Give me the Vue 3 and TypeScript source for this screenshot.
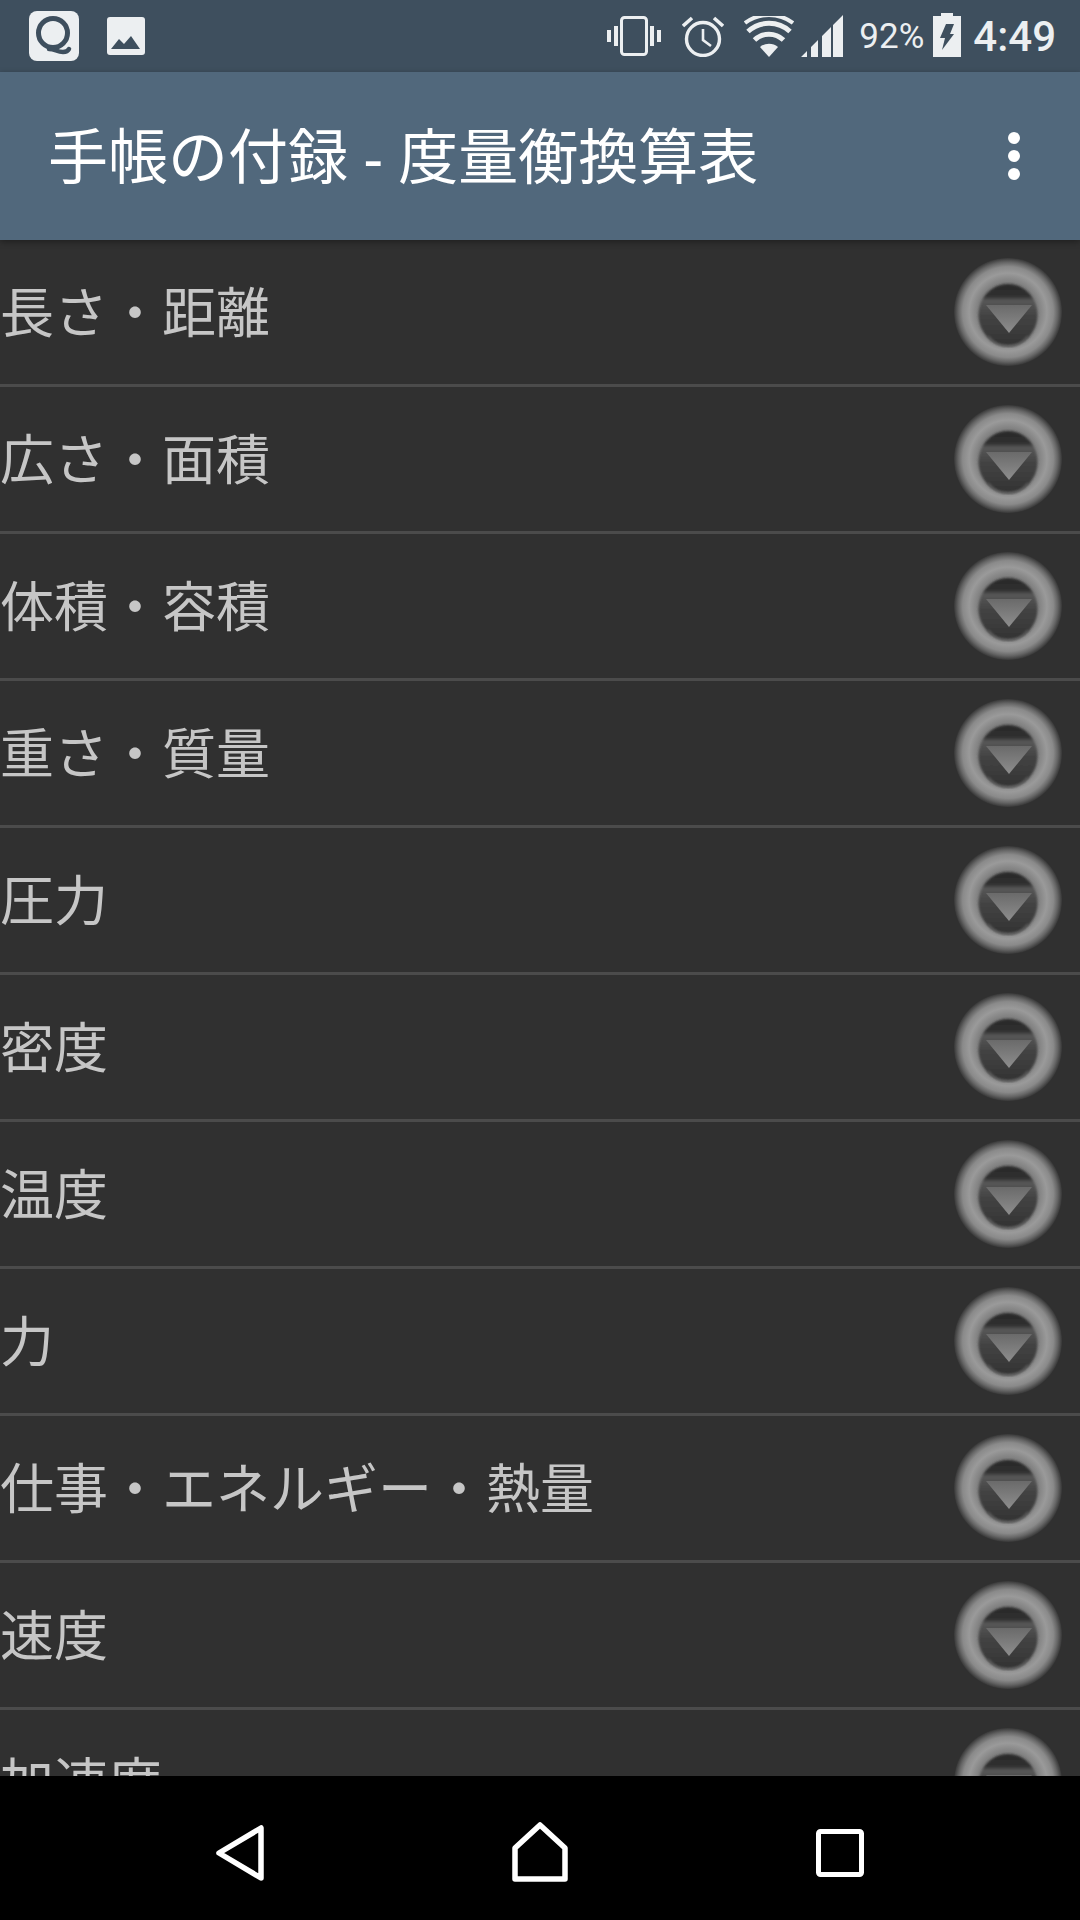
<script setup lang="ts">
const items: string[] = [
  '長さ・距離',
  '広さ・面積',
  '体積・容積',
  '重さ・質量',
  '圧力',
  '密度',
  '温度',
  '力',
  '仕事・エネルギー・熱量',
  '速度',
  '加速度',
]
</script>

<template>
  <div class="screen">
    <div class="status-bar">
      <div class="q-icon">
        <svg width="50" height="50" viewBox="0 0 50 50">
          <circle cx="24" cy="22" r="14.5" fill="none" stroke="#3e4f5e" stroke-width="5" />
          <path d="M20 38 C26 38 28 41 34 41 C37 41 39 40 40 38" fill="none" stroke="#3e4f5e" stroke-width="4.5" stroke-linecap="round" />
        </svg>
      </div>
      <svg class="pic-icon" width="38" height="38" viewBox="0 0 38 38">
        <rect width="38" height="38" rx="3" fill="#eceff1" />
        <path d="M4 32 L12 22 L17 27 L24 19 L33 32 Z" fill="#3e4f5e" />
      </svg>
      <div class="spacer"></div>
      <svg class="vibrate" width="54" height="40" viewBox="0 0 54 40">
        <rect x="14.5" y="1.5" width="25" height="37" rx="3" fill="none" stroke="#eceff1" stroke-width="3" />
        <rect x="7" y="10" width="4" height="20" fill="#eceff1" />
        <rect x="0" y="14" width="4" height="12" fill="#eceff1" />
        <rect x="43" y="10" width="4" height="20" fill="#eceff1" />
        <rect x="50" y="14" width="4" height="12" fill="#eceff1" />
      </svg>
      <svg class="alarm" width="42" height="42" viewBox="0 0 42 42">
        <circle cx="21" cy="24" r="16.5" fill="none" stroke="#eceff1" stroke-width="3.4" />
        <path d="M21 14 V25 L29 31" fill="none" stroke="#eceff1" stroke-width="2.6" />
        <path d="M1 11 L10 3 M41 11 L32 3" fill="none" stroke="#eceff1" stroke-width="3.6" />
      </svg>
      <svg class="wifi" width="50" height="41" viewBox="0 0 50 41">
        <path d="M25 41 L16 31 A14 14 0 0 1 34 31 Z" fill="#eceff1" />
        <path d="M10.5 24 A21 21 0 0 1 39.5 24 M4 15.5 A31 31 0 0 1 46 15.5" fill="none" stroke="#eceff1" stroke-width="5" />
        <path d="M1 7 A40 40 0 0 1 49 7" fill="none" stroke="#eceff1" stroke-width="4" />
      </svg>
      <svg class="signal" width="42" height="42" viewBox="0 0 42 42">
        <path d="M0 42 L6 36 V42 Z M10 42 V32 L17 25 V42 Z M21 42 V21 L30 12 V42 Z M32 42 V10 L42 0 V42 Z" fill="#eceff1" />
      </svg>
      <span class="battery-text">92%</span>
      <svg class="battery" width="28" height="44" viewBox="0 0 28 44">
        <path d="M8 0 H20 V3 H28 V44 H0 V3 H8 Z" fill="#eceff1" />
        <path d="M13 11 H21 L17 21 H21 L9 37 L12 25 H7 Z" fill="#3e4f5e" />
      </svg>
      <span class="clock">4:49</span>
    </div>

    <header class="app-bar">
      <h1 class="title">手帳の付録 - 度量衡換算表</h1>
      <div class="menu">
        <i></i><i></i><i></i>
      </div>
    </header>

    <main class="list">
      <div v-for="item in items" :key="item" class="row">
        <span class="label">{{ item }}</span>
        <svg class="knob" width="120" height="120" viewBox="0 0 120 120">
          <defs>
            <filter id="soft" x="-20%" y="-20%" width="140%" height="140%">
              <feGaussianBlur stdDeviation="1.3" />
            </filter>
            <radialGradient id="ring">
              <stop offset="0.5" stop-color="#767676" />
              <stop offset="0.72" stop-color="#9a9a9a" />
              <stop offset="0.84" stop-color="#8a8a8a" />
              <stop offset="0.92" stop-color="#666666" />
              <stop offset="1" stop-color="#383838" />
            </radialGradient>
            <linearGradient id="well" x1="0" y1="0" x2="0" y2="1">
              <stop offset="0" stop-color="#2b2b2b" />
              <stop offset="0.2" stop-color="#2f2f2f" />
              <stop offset="0.26" stop-color="#565656" />
              <stop offset="0.36" stop-color="#505050" />
              <stop offset="0.5" stop-color="#444444" />
              <stop offset="1" stop-color="#333333" />
            </linearGradient>
            <linearGradient id="tri" x1="0" y1="0" x2="0" y2="1">
              <stop offset="0" stop-color="#6a6a6a" />
              <stop offset="1" stop-color="#8e8e8e" />
            </linearGradient>
          </defs>
          <circle cx="60" cy="60" r="54" fill="url(#ring)" />
          <ellipse cx="60" cy="63" rx="29.5" ry="31" fill="url(#well)" filter="url(#soft)" />
          <path d="M40 84 A25 25 0 0 0 80 84" fill="none" stroke="#5c5c5c" stroke-width="2" filter="url(#soft)" />
          <path d="M38 53 H84 L61 81 Z" fill="url(#tri)" />
        </svg>
      </div>
    </main>

    <nav class="nav-bar">
      <svg class="back" width="48" height="56" viewBox="0 0 48 56">
        <path d="M45 3 V53 L3 28 Z" fill="none" stroke="#fff" stroke-width="5.5" stroke-linejoin="round" />
      </svg>
      <svg class="home" width="56" height="60" viewBox="0 0 56 60">
        <path d="M28 3 L53 26 V57 H3 V26 Z" fill="none" stroke="#fff" stroke-width="5.5" stroke-linejoin="round" />
      </svg>
      <svg class="recent" width="48" height="48" viewBox="0 0 48 48">
        <rect x="2.5" y="2.5" width="43" height="43" rx="2" fill="none" stroke="#fff" stroke-width="5" />
      </svg>
    </nav>
  </div>
</template>

<style scoped>
.screen {
  width: 1080px;
  height: 1920px;
  display: flex;
  flex-direction: column;
  overflow: hidden;
  background: #303030;
  font-family: "Noto Sans CJK JP", "Noto Sans", sans-serif;
}

.status-bar {
  height: 72px;
  flex-shrink: 0;
  display: flex;
  align-items: center;
  padding: 0 24px 0 29px;
  box-sizing: border-box;
  background: #3e4f5e;
  color: #eceff1;
  font-family: Roboto, sans-serif;
}
.q-icon {
  width: 50px;
  height: 50px;
  border-radius: 8px;
  background: #eceff1;
}
.pic-icon {
  margin-left: 28px;
}
.spacer {
  flex: 1;
}
.alarm {
  margin-left: 21px;
}
.wifi {
  margin-left: 20px;
}
.signal {
  margin-left: 7px;
}
.battery-text {
  margin-left: 16px;
  font-size: 35px;
}
.battery {
  margin-left: 9px;
  margin-bottom: 2px;
}
.clock {
  margin-left: 12px;
  font-size: 42px;
  font-weight: 500;
}

.app-bar {
  height: 168px;
  flex-shrink: 0;
  display: flex;
  align-items: center;
  justify-content: space-between;
  padding: 0 60px 0 48px;
  box-sizing: border-box;
  background: #51687c;
  position: relative;
  box-shadow: 0 2px 6px rgba(0, 0, 0, 0.35);
}
.title {
  margin: 0;
  padding-bottom: 7px;
  font-family: "Liberation Sans", "Noto Sans CJK JP", sans-serif;
  font-size: 60px;
  font-weight: 400;
  word-spacing: -1.5px;
  color: #fff;
}
.menu {
  display: flex;
  flex-direction: column;
  gap: 6px;
}
.menu i {
  display: block;
  width: 12px;
  height: 12px;
  border-radius: 50%;
  background: #fff;
}

.list {
  flex: 1;
  overflow: hidden;
}
.row {
  height: 144px;
  display: flex;
  align-items: center;
  justify-content: space-between;
  padding-right: 12px;
  border-bottom: 3px solid #4b4b4b;
}
.label {
  padding-bottom: 5px;
  font-size: 54px;
  color: #c6c6c6;
}

.nav-bar {
  height: 144px;
  flex-shrink: 0;
  background: #000;
  position: relative;
}
.nav-bar svg {
  position: absolute;
}
.back {
  left: 216px;
  top: 49px;
}
.home {
  left: 512px;
  top: 46px;
}
.recent {
  left: 816px;
  top: 53px;
}
</style>
